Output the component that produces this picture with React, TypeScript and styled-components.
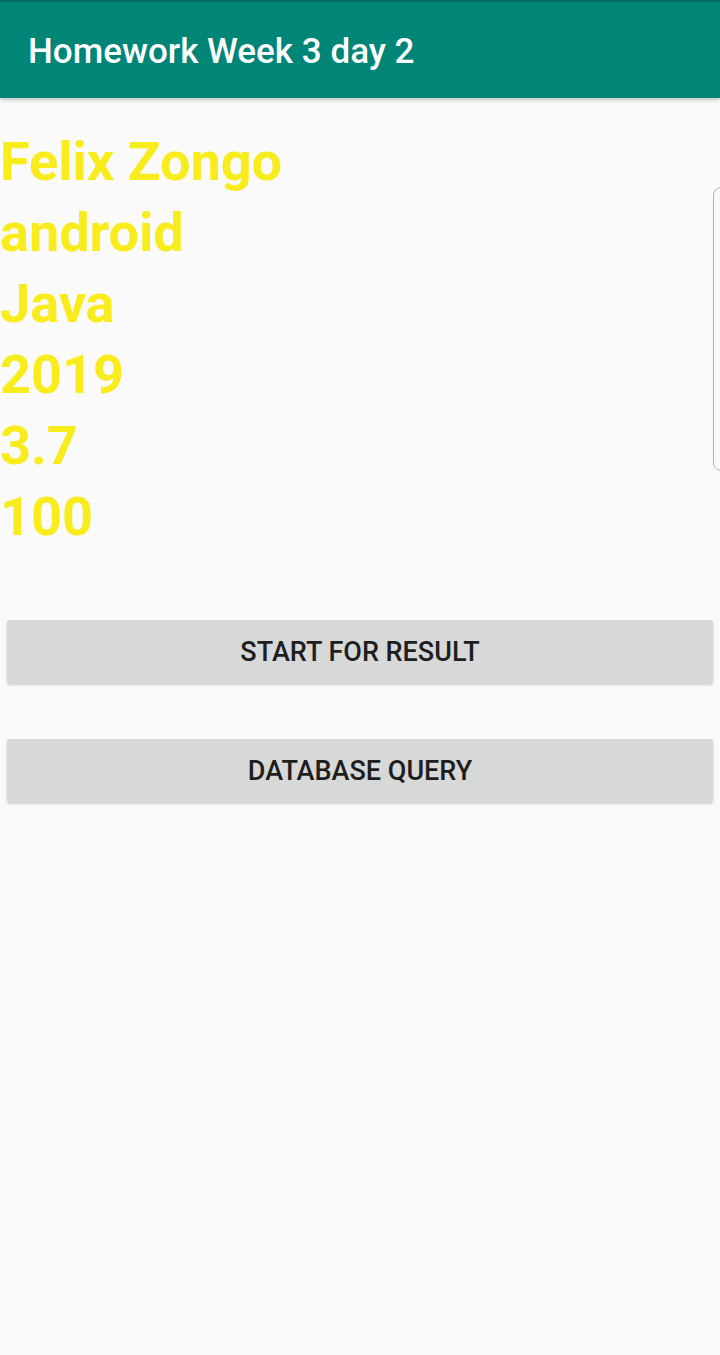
import React from "react";
import styled, { createGlobalStyle } from "styled-components";

const Global = createGlobalStyle`
  html, body { margin: 0; padding: 0; background: #fafafa; }
  body { font-family: Roboto, "Noto Sans", sans-serif; }
`;

const Screen = styled.div`
  position: relative;
  width: 720px;
  height: 1355px;
  background: #fafafa;
  overflow: hidden;
`;

const AppBar = styled.header`
  height: 96px;
  border-top: 2px solid #00695f;
  background: #008577;
  display: flex;
  align-items: center;
  padding-left: 28px;
  box-shadow: 0 2px 4px rgba(0, 0, 0, 0.22);
  position: relative;
  z-index: 1;
`;

const Title = styled.h1`
  margin: 0;
  padding-top: 2px;
  font-family: Roboto, sans-serif;
  font-weight: 500;
  font-size: 35px;
  color: #ffffff;
  letter-spacing: 0;
`;

const Info = styled.div`
  display: flex;
  flex-direction: column;
  padding-top: 28px;
`;

const InfoLine = styled.div`
  font-family: Roboto, sans-serif;
  font-weight: 700;
  font-size: 54px;
  line-height: 71px;
  height: 71px;
  color: #f8ec1c;
`;

const Actions = styled.div`
  display: flex;
  flex-direction: column;
  gap: 56px;
  padding: 68px 7px 0 7px;
`;

const Button = styled.button`
  height: 63px;
  border: none;
  border-radius: 3px;
  background: #d7d8d8;
  box-shadow: 0 2px 3px rgba(0, 0, 0, 0.18);
  font-family: Roboto, sans-serif;
  font-weight: 500;
  font-size: 27px;
  color: #1e1e1e;
  letter-spacing: 0;
  cursor: pointer;
`;

const EdgeHandle = styled.div`
  position: absolute;
  left: 713px;
  top: 187px;
  width: 20px;
  height: 284px;
  border: 1.5px solid #b4b4b4;
  border-radius: 8px;
  box-sizing: border-box;
`;

const lines = ["Felix Zongo", "android", "Java", "2019", "3.7", "100"];

export default function App() {
  return (
    <Screen>
      <Global />
      <AppBar>
        <Title>Homework Week 3 day 2</Title>
      </AppBar>
      <Info>
        {lines.map((l) => (
          <InfoLine key={l}>{l}</InfoLine>
        ))}
      </Info>
      <Actions>
        <Button>START FOR RESULT</Button>
        <Button>DATABASE QUERY</Button>
      </Actions>
      <EdgeHandle />
    </Screen>
  );
}
